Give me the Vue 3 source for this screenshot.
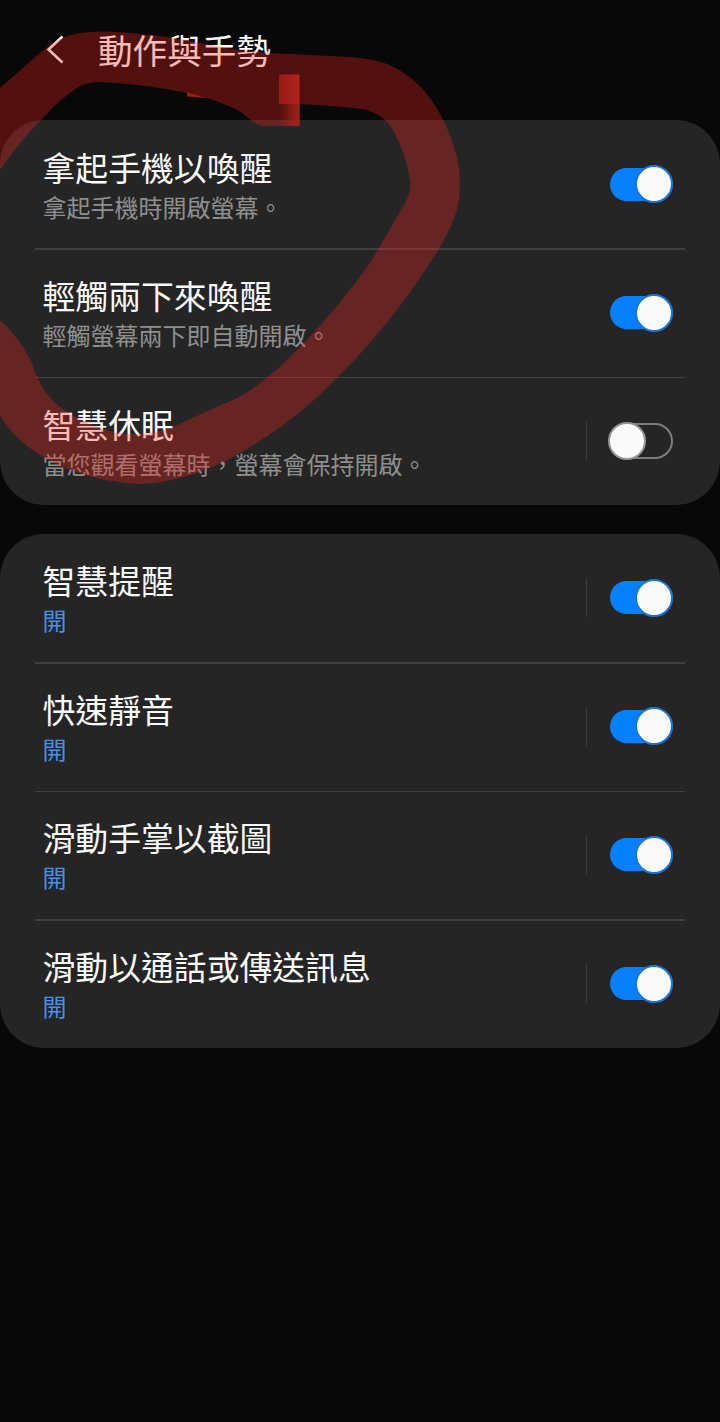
<template>
  <div class="screen">
    <header class="header">
      <button class="back" aria-label="返回">
        <svg width="20" height="32" viewBox="0 0 20 32">
          <path d="M17.5 3.5 L3.5 16.5 L17.5 29.5" />
        </svg>
      </button>
      <h1>動作與手勢</h1>
    </header>

    <section v-for="(group, index) in groups" :key="index" class="card">
      <div v-for="item in group" :key="item.title" class="row">
        <div class="text">
          <div class="title">{{ item.title }}</div>
          <div class="desc" :class="{ status: item.status }">{{ item.status || item.desc }}</div>
        </div>
        <span v-if="item.split" class="split"></span>
        <button class="switch" :class="{ on: item.on }" role="switch" :aria-checked="item.on"
          @click="item.on = !item.on">
          <span class="thumb"></span>
        </button>
      </div>
    </section>

    <!-- marker stroke -->
    <svg class="marker" width="720" height="520" viewBox="0 0 720 520">
      <defs>
        <linearGradient id="tip">
          <stop offset="0" stop-color="#951c16" />
          <stop offset="1" stop-color="#b3231b" />
        </linearGradient>
        <linearGradient id="fade">
          <stop offset="0" stop-color="#b3231b" stop-opacity="0" />
          <stop offset="1" stop-color="#b3231b" stop-opacity="0.85" />
        </linearGradient>
      </defs>
      <path class="ink" :d="stroke" />
      <path class="nick" d="M187 92.5 L194 94 L206 98 L187 96.5 Z" />
      <rect x="279" y="74.5" width="20.5" height="29.5" fill="url(#tip)" />
      <rect x="279" y="104" width="20.5" height="22" fill="url(#fade)" />
    </svg>
  </div>
</template>

<script setup>
import { ref } from 'vue'

const groups = ref([
  [
    { title: '拿起手機以喚醒', desc: '拿起手機時開啟螢幕。', on: true },
    { title: '輕觸兩下來喚醒', desc: '輕觸螢幕兩下即自動開啟。', on: true },
    { title: '智慧休眠', desc: '當您觀看螢幕時，螢幕會保持開啟。', on: false, split: true }
  ],
  [
    { title: '智慧提醒', status: '開', on: true, split: true },
    { title: '快速靜音', status: '開', on: true, split: true },
    { title: '滑動手掌以截圖', status: '開', on: true, split: true },
    { title: '滑動以通話或傳送訊息', status: '開', on: true, split: true }
  ]
])

const stroke = [
  'M0 88 L42 51 Q61 35 80 33 Q105 29 150 35 Q169 37 187 40 Q228 50 270 53',
  'L340 56.5 Q360 57 380 61.5 Q407 70 427 94 Q447 120 457 157 Q463 184 457 210',
  'Q453 224 440 247 Q396 319 338 377 Q293 424 233 457 Q187 482 140 484',
  'Q83 481 40 455 Q14 439 0 415 L0 320 Q14 333 23 347 Q31 359 35 372',
  'Q44 395 60 407 Q82 424 117 433 Q146 437 173 427 Q205 412 237 398',
  'Q267 382 300 347 Q340 306 372 260 L405 203 Q411 193 410 182',
  'Q408 158 393 130 Q385 116 367 110 Q352 107 300 104 L299.5 126 L263 126',
  'Q256 125 247 117 Q241 111 233 108 Q209 97 187 93 Q144 84 100 82',
  'Q85 82 77 88 Q60 99 44 117 Q19 142 0 170 Z'
].join(' ')
</script>

<style>
body {
  background: #080808;
}
</style>

<style scoped>
.screen {
  position: relative;
  width: 720px;
  height: 1422px;
  overflow: hidden;
  background: #080808;
  color: #fafafa;
  font-family: "Noto Sans CJK TC", sans-serif;
}

button {
  padding: 0;
  border: 0;
  background: none;
}

.header {
  display: flex;
  align-items: center;
  box-sizing: border-box;
  height: 119.8px;
  padding: 0 0 21px 45px;
}

.back {
  display: flex;
  width: 53px;
}

.back path {
  fill: none;
  stroke: #fafafa;
  stroke-width: 2.6;
}

.header h1 {
  margin: 0;
  font-size: 34.6px;
  font-weight: 400;
  line-height: 50px;
}

.card {
  margin-bottom: 28.2px;
  border-radius: 44px;
  background: #252525;
}

.row {
  position: relative;
  display: flex;
  align-items: center;
  box-sizing: border-box;
  height: 128.55px;
  padding: 0 47px 0 42.5px;
}

.row + .row::before {
  content: "";
  position: absolute;
  top: 0;
  left: 35px;
  right: 35px;
  height: 1.5px;
  background: #404040;
}

.text {
  flex: 1;
}

.title {
  font-size: 32.85px;
  line-height: 44px;
}

.desc {
  color: #8f8f8f;
  font-size: 24px;
  line-height: 35px;
}

.desc.status {
  color: #4a8fe8;
}

.split {
  width: 1px;
  height: 39px;
  margin-right: 23px;
  background: #3d3d3d;
}

.switch {
  display: flex;
  align-items: center;
  box-sizing: border-box;
  width: 63px;
  height: 36px;
  border: 2px solid #7d7d7d;
  border-radius: 18px;
}

.thumb {
  flex: none;
  box-sizing: border-box;
  width: 38px;
  height: 38px;
  margin-left: -4px;
  border: 2px solid #959595;
  border-radius: 50%;
  background: #fafafa;
}

.switch.on {
  justify-content: flex-end;
  height: 33px;
  border: 0;
  background: #0680ff;
}

.switch.on .thumb {
  border-color: #1a76d6;
}

.marker {
  position: absolute;
  top: 0;
  left: 0;
  pointer-events: none;
}

.ink {
  fill: rgba(255, 41, 30, 0.3);
}

.nick {
  fill: #9c1f18;
}
</style>
